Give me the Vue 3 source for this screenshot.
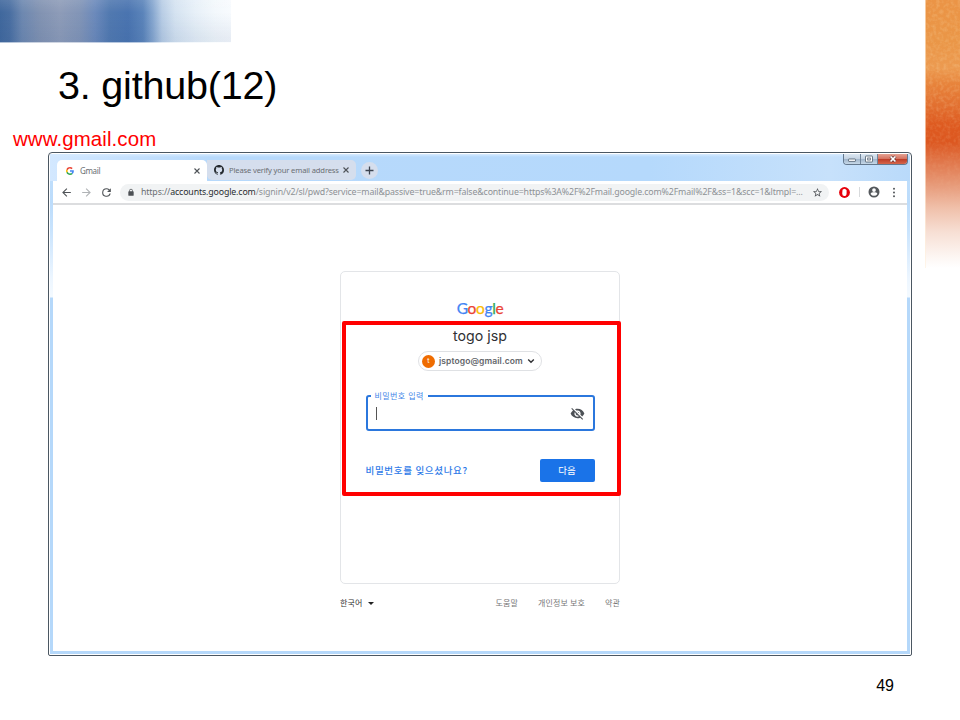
<script setup>
const footerLinks = ['도움말', '개인정보 보호', '약관']
const logo = [
  ['G', 'b'], ['o', 'r'], ['o', 'y'], ['g', 'b'], ['l', 'g'], ['e', 'r'],
]
</script>

<template>
  <div class="slide">
    <main class="main">
      <div class="sky"></div>
      <h1 class="title">3. github(12)</h1>
      <div class="site">www.gmail.com</div>

      <section class="window">
        <div class="frame">
          <div class="tabs">
            <div class="tab active">
              <svg class="gicon" viewBox="0 0 48 48">
                <path fill="#EA4335" d="M24 9.5c3.54 0 6.71 1.22 9.21 3.6l6.85-6.85C35.9 2.38 30.47 0 24 0 14.62 0 6.51 5.38 2.56 13.22l7.98 6.19C12.43 13.72 17.74 9.5 24 9.5z" />
                <path fill="#4285F4" d="M46.98 24.55c0-1.57-.15-3.09-.38-4.55H24v9.02h12.94c-.58 2.96-2.26 5.48-4.78 7.18l7.73 6c4.51-4.18 7.09-10.36 7.09-17.65z" />
                <path fill="#FBBC05" d="M10.53 28.59c-.48-1.45-.76-2.99-.76-4.59s.27-3.14.76-4.59l-7.98-6.19C.92 16.46 0 20.12 0 24s.92 7.54 2.56 10.78l7.97-6.19z" />
                <path fill="#34A853" d="M24 48c6.48 0 11.93-2.13 15.89-5.81l-7.73-6c-2.15 1.45-4.92 2.3-8.16 2.3-6.26 0-11.57-4.22-13.47-9.91l-7.98 6.19C6.51 42.62 14.62 48 24 48z" />
              </svg>
              <span class="tab-label">Gmail</span>
              <svg class="x" viewBox="0 0 8 8"><path d="M1.5 1.5l5 5M6.5 1.5l-5 5" /></svg>
            </div>
            <div class="tab idle">
              <svg class="octo" viewBox="0 0 16 16"><path d="M8 0C3.58 0 0 3.58 0 8c0 3.54 2.29 6.53 5.47 7.59.4.07.55-.17.55-.38 0-.19-.01-.82-.01-1.49-2.01.37-2.53-.49-2.69-.94-.09-.23-.48-.94-.82-1.13-.28-.15-.68-.52-.01-.53.63-.01 1.08.58 1.23.82.72 1.21 1.87.87 2.33.66.07-.52.28-.87.51-1.07-1.78-.2-3.64-.89-3.64-3.95 0-.87.31-1.59.82-2.15-.08-.2-.36-1.02.08-2.12 0 0 .67-.21 2.2.82.64-.18 1.32-.27 2-.27s1.36.09 2 .27c1.53-1.04 2.2-.82 2.2-.82.44 1.1.16 1.92.08 2.12.51.56.82 1.27.82 2.15 0 3.07-1.87 3.75-3.65 3.95.29.25.54.73.54 1.48 0 1.07-.01 1.93-.01 2.2 0 .21.15.46.55.38A8.01 8.01 0 0 0 16 8c0-4.42-3.58-8-8-8z" /></svg>
              <span class="tab-label verify">Please verify your email address</span>
              <svg class="x" viewBox="0 0 8 8"><path d="M1.5 1.5l5 5M6.5 1.5l-5 5" /></svg>
            </div>
            <div class="plus"><svg viewBox="0 0 9 9"><path d="M4.5.5v8M.5 4.5h8" /></svg></div>
            <div class="controls">
              <span class="ctl min"><svg viewBox="0 0 10 8"><rect x="1.500" y="4" width="7" height="2.400" rx=".5" /></svg></span>
              <span class="ctl max"><svg viewBox="0 0 10 8"><rect x="1.500" y="1" width="7" height="6" rx=".5" /><rect x="3.700" y="3" width="2.600" height="2" /></svg></span>
              <span class="ctl close"><svg viewBox="0 0 10 8"><path class="o" d="M2.600 1.500l4.800 5M7.400 1.500l-4.800 5" /><path class="i" d="M2.600 1.500l4.800 5M7.400 1.500l-4.800 5" /></svg></span>
            </div>
          </div>

          <div class="toolbar">
            <svg class="nav" viewBox="0 0 24 24"><path d="M20 11H7.83l5.59-5.59L12 4l-8 8 8 8 1.41-1.41L7.83 13H20v-2z" /></svg>
            <svg class="nav off" viewBox="0 0 24 24"><path d="M12 4l-1.41 1.41L16.17 11H4v2h12.17l-5.58 5.59L12 20l8-8z" /></svg>
            <svg class="nav" viewBox="0 0 24 24"><path d="M17.65 6.35A7.96 7.96 0 0 0 12 4a8 8 0 1 0 7.73 10h-2.08A6 6 0 1 1 12 6c1.66 0 3.14.69 4.22 1.78L13 11h7V4l-2.35 2.35z" /></svg>
            <div class="omnibox">
              <svg class="lock" viewBox="0 0 24 24"><path d="M18 8h-1V6A5 5 0 0 0 7 6v2H6a2 2 0 0 0-2 2v10c0 1.1.9 2 2 2h12a2 2 0 0 0 2-2V10a2 2 0 0 0-2-2zM9 6a3 3 0 0 1 6 0v2H9z" /></svg>
              <span class="url"><span class="scheme">https://</span><span class="host">accounts.google.com</span>/signin/v2/sl/pwd?service=mail&amp;passive=true&amp;rm=false&amp;continue=https%3A%2F%2Fmail.google.com%2Fmail%2F&amp;ss=1&amp;scc=1&amp;ltmpl=...</span>
              <svg class="star" viewBox="0 0 24 24"><path d="M22 9.24l-7.19-.62L12 2 9.19 8.63 2 9.24l5.46 4.73L5.82 21 12 17.27 18.18 21l-1.63-7.03L22 9.24zM12 15.4l-3.76 2.27 1-4.28-3.32-2.88 4.38-.38L12 6.1l1.71 4.04 4.38.38-3.32 2.88 1 4.28L12 15.4z" /></svg>
            </div>
            <svg class="ext" viewBox="0 0 11 11"><circle cx="5.5" cy="5.5" r="5.4" fill="#e6000b" /><path d="M3.5 3.2q0-.8.6-.6.2-.8.9-.5.5-.7 1 0 .8-.2.8.6.8-.2.8.6v3q0 2.8-2.2 2.8-2.2 0-2.2-2.6z" fill="#fff" /></svg>
            <i class="sep"></i>
            <svg class="user" viewBox="0 0 24 24"><path fill-rule="evenodd" d="M12 1a11 11 0 1 0 0 22 11 11 0 0 0 0-22zm0 3.5a3.7 3.7 0 1 1 0 7.4 3.7 3.7 0 0 1 0-7.4zM5.2 15.8C5.3 13.500 9.700 12.700 12 12.700s6.700.8 6.800 3.100A8.200 8.200 0 0 1 12 19.500a8.200 8.200 0 0 1-6.800-3.700z" /></svg>
            <svg class="dots" viewBox="0 0 4 12"><circle cx="2" cy="2" r="1.1" /><circle cx="2" cy="6" r="1.1" /><circle cx="2" cy="10" r="1.100" /></svg>
          </div>

          <div class="page">
            <div class="card">
              <div class="logo"><span v-for="([c, k], i) in logo" :key="i" :class="k">{{ c }}</span></div>
              <div class="name">togo jsp</div>
              <div class="account">
                <span class="avatar">t</span>
                <span class="mail">jsptogo@gmail.com</span>
                <svg class="chev" viewBox="0 0 8 6"><path d="M1.2 1.400L4 4.200l2.800-2.800" /></svg>
              </div>
              <fieldset class="field">
                <legend>비밀번호 입력</legend>
                <div class="entry">
                  <i class="caret"></i>
                  <svg class="eye" viewBox="0 0 24 24"><path d="M12 7a5 5 0 0 1 4.640 6.830l2.920 2.920A11.820 11.820 0 0 0 22.990 12 11.830 11.830 0 0 0 12 4.500c-1.400 0-2.740.25-3.980.7l2.160 2.160C10.740 7.130 11.350 7 12 7zM2 4.270l2.280 2.280.46.46A11.800 11.800 0 0 0 1 12c1.730 4.390 6 7.500 11 7.500 1.550 0 3.030-.3 4.380-.84l.42.42L19.730 22 21 20.730 3.270 3 2 4.270zM7.530 9.800l1.550 1.550A3 3 0 0 0 12.650 14.920l1.550 1.550A5 5 0 0 1 7.530 9.800zm4.310-.78l3.150 3.150.02-.16a3 3 0 0 0-3-3l-.17.01z" /></svg>
                </div>
              </fieldset>
              <div class="actions">
                <span class="forgot">비밀번호를 잊으셨나요?</span>
                <span class="next">다음</span>
              </div>
              <div class="highlight"></div>
            </div>
            <div class="footer">
              <span class="lang">한국어 <i></i></span>
              <span class="links"><span v-for="l in footerLinks" :key="l">{{ l }}</span></span>
            </div>
          </div>
        </div>
      </section>
      <div class="number">49</div>
    </main>
    <aside class="flame">
      <svg width="35" height="268">
        <filter id="grain" x="0" y="0" width="100%" height="100%">
          <feTurbulence type="fractalNoise" baseFrequency=".28" numOctaves="2" seed="4" />
          <feColorMatrix values="0 0 0 0 1  0 0 0 0 .9  0 0 0 0 .6  1.600 0 0 0 -.65" />
        </filter>
        <rect width="35" height="268" filter="url(#grain)" />
      </svg>
    </aside>
  </div>
</template>

<style>
body { margin: 0; background: #fff; }
</style>

<style scoped>
* { box-sizing: border-box; }
svg { display: block; flex: none; }
.slide { width: 960px; height: 720px; display: flex; overflow: hidden; background: #fff; font-family: "Liberation Sans", "Noto Sans CJK KR", sans-serif; }
.main { width: 925px; display: flex; flex-direction: column; }
.flame { width: 35px; height: 268px; border-left: 1px solid rgba(255, 240, 220, .6); background: linear-gradient(#eb9446 0, #ea9647 40px, #ec9a50 68px, #e7823a 85px, #e27030 105px, #de5a20 125px, #dc5720 142px, #e07447 160px, #e79a79 185px, #f0c0aa 208px, #f7dfd4 232px, #fdf7f4 258px, #fff 268px); }
.flame svg { opacity: .25; -webkit-mask-image: linear-gradient(#000 40%, transparent 80%); mask-image: linear-gradient(#000 40%, transparent 80%); }
.sky { flex: none; width: 231px; height: 43px; border-bottom: 1px solid rgba(255, 255, 255, .55); background: linear-gradient(rgba(255, 255, 255, .1), transparent 30%, rgba(30, 70, 130, .08) 90%), linear-gradient(90deg, #40689d 0, #4a6fa2 10px, #6d88b0 22px, #8293b2 40px, #8e9cb8 60px, #8295b7 80px, #6c8abb 95px, #5179b0 110px, #4a74b0 128px, #5b84ba 143px, #88a8d0 153px, #b8cde5 162px, #d5e3f1 175px, #e7f0f8 195px, #f3f8fc 215px, #f8fbfe 231px); }
.title { margin: 19px 0 0 58px; height: 46px; line-height: 46px; font-size: 39.500px; letter-spacing: -.2px; font-weight: 400; color: #000; white-space: nowrap; }
.site { margin: 18px 0 1px 13px; height: 25px; line-height: 25px; font-size: 20.450px; letter-spacing: .1px; color: #f00; }
.window { flex: none; margin-left: 48px; width: 864px; height: 504px; border: 1px solid #4b5762; border-radius: 4px 4px 2px 2px; background: #fff; padding: 1px; }
.frame { height: 100%; padding: 0 3px 3px; border-radius: 3px 3px 0 0; background: linear-gradient(#c1dffc 0, #bcdcfb 48px, #c8e3fd 75px, #edf6ff 125px, #f4faff 143px, #b5d8fa 144px, #b5d8fa 100%); display: flex; flex-direction: column; }
.tabs { flex: none; height: 27px; display: flex; margin: 0 -3px; padding-left: 7px; align-items: flex-end; background: linear-gradient(#d7ebff 0, transparent 3px), linear-gradient(90deg, #d3e8ff 0, #b7d9fb 160px, #b5d9fc 600px, #c7e1fb 780px, #b9dafa); font-family: "Noto Sans", "Open Sans", sans-serif; }
.tab { display: flex; align-items: center; height: 21px; font-size: 8px; color: #6a6e73; }
.active { width: 150px; background: #fff; border-radius: 5px 5px 0 0; padding: 0 6px 0 9px; }
.idle { width: 149px; height: 20px; margin-bottom: 1px; background: #d5deed; border-radius: 0 5px 5px 5px; padding: 0 6px 0 7px; }
.tab-label { flex: 1; min-width: 0; white-space: nowrap; letter-spacing: -.35px; }
.gicon { width: 8px; height: 8px; margin-right: 6px; }
.octo { width: 10px; height: 10px; margin-right: 5px; fill: #24292e; }
.verify { font-size: 7.600px; letter-spacing: -.15px; }
.x { width: 8px; height: 8px; stroke: #4e5257; fill: none; stroke-width: 1.1; }
.plus { width: 17px; height: 17px; margin: 0 0 2px 5px; border-radius: 50%; background: #d5deed; display: flex; align-items: center; justify-content: center; }
.plus svg { width: 9px; height: 9px; stroke: #3c4450; stroke-width: 1.3; }
.controls { margin-left: auto; margin-right: 2px; align-self: flex-start; display: flex; height: 11px; border: 1px solid #64788d; border-top: 0; border-radius: 0 0 4px 4px; overflow: hidden; }
.ctl { display: flex; align-items: center; justify-content: center; background: linear-gradient(#dce8f3, #c5d3e2 45%, #9fb4ca 50%, #c6d8e8); border-right: 1px solid #71859a; }
.ctl svg { width: 10px; height: 8px; }
.ctl rect { fill: #fff; stroke: #4a5a6b; stroke-width: .8; }
.min { width: 17px; }
.max { width: 17px; }
.close { width: 29px; border: 0; background: linear-gradient(#e5a293, #d57563 45%, #bb3a25 50%, #d6664b); }
.close .o { stroke: #683a3a; stroke-width: 3; }
.close .i { stroke: #fff; stroke-width: 1.700; }
.toolbar { flex: none; height: 24px; padding: 1px 11px 1px 7px; background: #fff; border-bottom: 2px solid #dcdddf; display: flex; align-items: center; }
.nav { width: 13px; height: 13px; margin-right: 7px; fill: #4f5357; }
.off { fill: #b0b3b6; }
.omnibox { width: 709px; height: 17px; border-radius: 9px; background: #f1f3f4; display: flex; align-items: center; padding: 0 6px 0 7px; }
.lock { width: 8px; height: 9px; margin-right: 6px; fill: #4c5054; }
.url { flex: 1; min-width: 0; white-space: nowrap; font-family: "Noto Sans", sans-serif; font-size: 8.800px; letter-spacing: -.14px; color: #8d9195; }
.scheme { color: #6a6e72; }
.host { color: #292c30; }
.star { width: 11px; height: 11px; fill: #54585c; }
.ext { width: 11px; height: 11px; margin-left: 10px; }
.sep { width: 1px; height: 10px; margin: 0 8px 0 9px; background: #d8dadc; }
.user { width: 12px; height: 12px; fill: #54585c; }
.dots { width: 4px; height: 11px; margin-left: 12px; fill: #54585c; }
.page { flex: 1; background: #fff; display: flex; flex-direction: column; align-items: center; padding-top: 66px; }
.card { position: relative; flex: none; width: 280px; height: 313px; border: 1px solid #e3e5e8; border-radius: 5px; padding: 0 25px; display: flex; flex-direction: column; align-items: center; font-family: Inter, "Noto Sans CJK KR", sans-serif; }
.logo { margin-top: 25px; height: 22px; line-height: 22px; font-family: Lato, sans-serif; font-size: 15.500px; letter-spacing: -.35px; -webkit-text-stroke: .25px; }
.b { color: #4285f4; } .r { color: #ea4335; } .y { color: #fbbc05; } .g { color: #34a853; }
.name { margin-top: 7px; height: 20px; line-height: 20px; font-size: 14.200px; color: #303134; white-space: nowrap; }
.account { margin-top: 5px; width: 124px; height: 20px; border: 1px solid #dfe1e4; border-radius: 10px; display: flex; align-items: center; padding: 0 6px 0 3px; }
.avatar { width: 13px; height: 13px; border-radius: 50%; background: #ef6c00; color: #fff; font-size: 7px; line-height: 12px; text-align: center; }
.mail { margin-left: 4px; flex: 1; font-size: 8.500px; letter-spacing: .1px; line-height: 16px; font-weight: 600; color: #62656a; }
.chev { width: 8px; height: 6px; stroke: #303134; stroke-width: 1.400; fill: none; }
.field { width: 229px; height: 40px; margin: 20px 0 0; padding: 0 8px 0 8px; border: 2px solid #2b77dd; border-radius: 3px; }
.field legend { height: 10px; line-height: 10px; margin-left: -5px; padding: 0 4px; font-size: 8px; letter-spacing: .4px; color: #4285e8; }
.entry { height: 24px; display: flex; align-items: center; justify-content: space-between; }
.caret { width: 1px; height: 13px; background: #555; }
.eye { width: 15px; height: 15px; fill: #4d5156; }
.actions { margin-top: 28px; width: 229px; display: flex; justify-content: space-between; align-items: center; }
.forgot { padding-bottom: 2px; font-size: 9.500px; font-weight: 500; font-family: "Noto Sans CJK KR", sans-serif; letter-spacing: .68px; color: #2f7be8; white-space: nowrap; }
.next { width: 55px; height: 23px; border-radius: 2px; background: #1a73e8; color: #fff; font-size: 9.500px; line-height: 23px; text-align: center; }
.highlight { position: absolute; left: 1px; top: 49px; width: 279px; height: 175px; border: 4px solid #f00; border-radius: 2px; }
.footer { width: 280px; margin-top: 13px; display: flex; justify-content: space-between; height: 12px; line-height: 12px; font-family: "Noto Sans CJK KR", sans-serif; font-size: 8px; letter-spacing: .15px; color: #777; }
.lang { display: flex; align-items: center; color: #333; }
.lang i { margin-left: 5px; border: 3px solid transparent; border-top-color: #222; border-bottom: 0; }
.links { display: flex; gap: 20px; }
.number { margin: 20px 31px 0 auto; height: 20px; line-height: 20px; font-size: 16px; color: #000; }
</style>
